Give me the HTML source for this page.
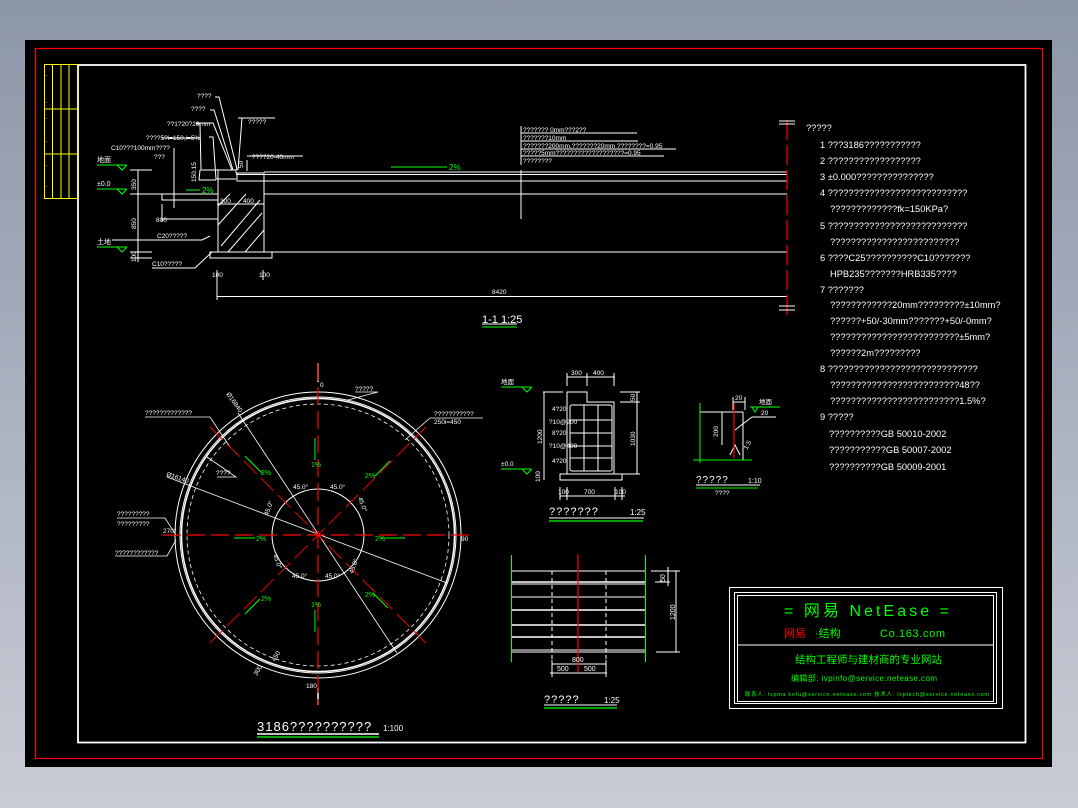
<!DOCTYPE html>
<html><head><meta charset="utf-8"><style>
html,body{margin:0;padding:0;width:1078px;height:808px;overflow:hidden;background:linear-gradient(#8b96a8,#c9ccd6);}
svg{display:block}
text{font-family:"Liberation Sans","Noto Sans CJK SC",sans-serif;fill:#fff}
</style></head><body>
<svg width="1078" height="808" viewBox="0 0 1078 808" xmlns="http://www.w3.org/2000/svg">
<rect x="25" y="40" width="1027" height="727" fill="#000"/>
<rect x="35.5" y="48.5" width="1007" height="710" fill="none" stroke="#f00" stroke-width="1.2"/>
<rect x="78" y="65" width="947.5" height="677.5" fill="none" stroke="#fff" stroke-width="1.8"/>
<g stroke="#ff0" stroke-width="1" fill="none">
<rect x="44.5" y="64.5" width="33" height="134"/>
<line x1="52.5" y1="64" x2="52.5" y2="198"/><line x1="61" y1="64" x2="61" y2="198"/><line x1="69" y1="64" x2="69" y2="198"/>
<line x1="44" y1="109" x2="78" y2="109"/><line x1="44" y1="154" x2="78" y2="154"/>
</g>
<g font-size="4"><text x="45" y="77" style="fill:#ff0">~</text><text x="45" y="104" style="fill:#ff0">~</text><text x="45" y="120" style="fill:#ff0">~</text><text x="45" y="143" style="fill:#ff0">~</text><text x="45" y="167" style="fill:#ff0">~</text><text x="45" y="188" style="fill:#ff0">~</text></g>

<g stroke="#fff" stroke-width="1" fill="none">
<line x1="264" y1="172" x2="787" y2="172"/><line x1="236" y1="174.5" x2="787" y2="174.5"/>
<line x1="264" y1="181" x2="787" y2="181"/><line x1="264" y1="194" x2="787" y2="194"/>
<line x1="210" y1="252" x2="787" y2="252"/>
<polyline points="218,252 218,170 236,170 236,173 264,173 264,252"/>
<rect x="210" y="252" width="62" height="6"/>
<rect x="237" y="173" width="27" height="8"/>
<line x1="221" y1="246" x2="260" y2="200"/><line x1="228" y1="252" x2="262" y2="213"/><line x1="245" y1="252" x2="264" y2="230"/><line x1="218" y1="225" x2="246" y2="194"/><line x1="218" y1="206" x2="230" y2="194"/>
<line x1="217" y1="204" x2="264" y2="204"/>
<line x1="138" y1="170" x2="138" y2="262"/>
<line x1="130" y1="170" x2="152" y2="170"/><line x1="130" y1="194" x2="218" y2="194"/><line x1="130" y1="252" x2="152" y2="252"/><line x1="130" y1="258" x2="152" y2="258"/>
<polyline points="162,194 162,200 218,200"/>
<line x1="162" y1="219" x2="218" y2="219"/><line x1="162" y1="204" x2="162" y2="222"/>
<line x1="174" y1="148" x2="174" y2="208"/>
<polyline points="196,124 200,124 201,170 218,170"/><polyline points="200,170 199,180 216,180"/>
<polyline points="209,137 213,137 216,179 236,179"/>
<polyline points="215,97 219,97 236,165 237,170"/><polyline points="210,110 214,110 233,170"/>
<polyline points="196,123 213,123 232,170"/>
<polyline points="162,138 200,138"/>
<polyline points="248,118 242,118 238,170"/><line x1="238" y1="118" x2="275" y2="118"/>
<polyline points="210,236 202,240 112,240"/><polyline points="212,252 195,268 152,268"/>
<line x1="247" y1="156" x2="303" y2="156"/><line x1="247" y1="160" x2="247" y2="171"/>
<line x1="217" y1="270" x2="217" y2="300"/><line x1="263" y1="270" x2="263" y2="280"/>
<line x1="217" y1="296.5" x2="787" y2="296.5"/>
<line x1="521" y1="170" x2="521" y2="219"/>
<line x1="521" y1="126" x2="521" y2="165"/>
<line x1="521" y1="133" x2="637" y2="133"/><line x1="521" y1="141" x2="638" y2="141"/><line x1="521" y1="149" x2="676" y2="149"/><line x1="521" y1="156" x2="664" y2="156"/>
<line x1="482" y1="324" x2="517" y2="324"/>
</g>
<line x1="787" y1="120" x2="787" y2="320" stroke="#f00" stroke-width="1.2" stroke-dasharray="20,5"/>
<g stroke="#fff"><line x1="779" y1="121" x2="795" y2="121"/><line x1="779" y1="124" x2="795" y2="124"/><line x1="779" y1="306" x2="795" y2="306"/><line x1="779" y1="310" x2="795" y2="310"/></g>
<g stroke="#0f0" stroke-width="1" fill="none">
<line x1="97" y1="165" x2="127" y2="165"/><line x1="97" y1="189" x2="127" y2="189"/><line x1="97" y1="247" x2="127" y2="247"/>
<polyline points="117,165 122,170 127,165"/><polyline points="117,189 122,194 127,189"/><polyline points="117,247 122,252 127,247"/>
<line x1="391" y1="167" x2="447" y2="167"/><line x1="186" y1="190" x2="200" y2="190"/>
<line x1="482" y1="327" x2="517" y2="327"/>
</g>
<g font-size="7"><text x="97" y="162">地面</text><text x="97" y="186">±0.0</text><text x="97" y="244">土地</text></g>
<g font-size="8"><text x="449" y="170" style="fill:#0f0">2%</text><text x="202" y="193" style="fill:#0f0">2%</text></g>
<g font-size="6.5">
<text x="197" y="98">????</text><text x="191" y="111">????</text><text x="167" y="126">??1?20?20mm</text><text x="146" y="140">????5?i=150,i=5%</text><text x="111" y="150">C10???100mm????</text><text x="154" y="159">???</text>
<text x="248" y="124">?????</text><text x="252" y="159">????20-40mm</text>
<text x="523" y="132">??????? 0mm???2??</text><text x="523" y="140">???????10mm</text><text x="523" y="148">???????200mm.???????20mm ????????=0.95</text><text x="523" y="155">?????5mm???????????????????=0.95</text><text x="523" y="163">????????</text>
<text x="156" y="222">800</text><text x="220" y="203">300</text><text x="243" y="203">400</text>
<text x="157" y="238">C20?????</text><text x="152" y="266">C10?????</text>
<text x="492" y="294">8420</text><text x="212" y="277">100</text><text x="259" y="277">100</text>
<text transform="translate(136,190) rotate(-90)">350</text><text transform="translate(136,229) rotate(-90)">850</text><text transform="translate(136,262) rotate(-90)">100</text>
<text transform="translate(196,182) rotate(-90)">150.15</text><text transform="translate(243,168) rotate(-90)">50</text>
</g>
<text x="482" y="323" font-size="11">1-1 1:25</text>

<g fill="none" stroke="#fff">
<circle cx="318" cy="535" r="143" stroke-width="1"/>
<circle cx="318" cy="535" r="138" stroke-width="1"/>
<circle cx="318" cy="535" r="136.5" stroke-width="1.5"/>
<circle cx="318" cy="535" r="131" stroke-width="0.8" stroke-dasharray="4,3"/>
<circle cx="318" cy="535" r="46" stroke-width="1"/>
<line x1="238" y1="413" x2="397" y2="653" stroke-width="0.8"/>
<line x1="167" y1="477" x2="447" y2="583" stroke-width="0.8"/>
<line x1="318" y1="363" x2="318" y2="382" stroke-width="1.5"/><line x1="318" y1="688" x2="318" y2="705" stroke-width="1.5"/>
<polyline points="145,417 210,417 230,447" stroke-width="0.8"/>
<polyline points="217,477 236,477 207,457" stroke-width="0.8"/>
<polyline points="117,518 165,518 176,535" stroke-width="0.8"/>
<polyline points="115,556 167,556 176,540" stroke-width="0.8"/>
<polyline points="355,392 378,392 348,400" stroke-width="0.8"/>
<polyline points="483,418 430,418 405,440" stroke-width="0.8"/>
</g>
<g stroke="#f00" stroke-width="0.9" fill="none" stroke-dasharray="18,6">
<line x1="163" y1="535" x2="472" y2="535" stroke-width="1.2"/>
<line x1="318" y1="363" x2="318" y2="705" stroke-width="1.2"/>
<line x1="210" y1="643" x2="426" y2="427"/><line x1="210" y1="427" x2="426" y2="643"/>
</g>
<g stroke="#0f0" stroke-width="1">
<line x1="315" y1="438" x2="315" y2="460"/><line x1="315" y1="610" x2="315" y2="632"/>
<line x1="234" y1="538" x2="255" y2="538"/><line x1="381" y1="538" x2="405" y2="538"/>
<line x1="245" y1="456" x2="262" y2="473"/><line x1="390" y1="461" x2="375" y2="476"/>
<line x1="245" y1="614" x2="260" y2="599"/><line x1="388" y1="608" x2="373" y2="593"/>
</g>
<g font-size="7"><text x="311" y="467" style="fill:#0f0">1%</text><text x="311" y="607" style="fill:#0f0">1%</text><text x="256" y="541" style="fill:#0f0">2%</text><text x="375" y="541" style="fill:#0f0">2%</text><text x="261" y="475" style="fill:#0f0">2%</text><text x="365" y="478" style="fill:#0f0">2%</text><text x="261" y="601" style="fill:#0f0">2%</text><text x="365" y="597" style="fill:#0f0">2%</text></g>
<g font-size="6.5">
<text x="320" y="387">0</text><text x="461" y="541">90</text><text x="306" y="688">180</text><text x="163" y="533">270°</text>
<text x="355" y="391">?????</text><text x="434" y="416">???????????</text><text x="434" y="424">250i=450</text>
<text x="145" y="415">?????????????</text><text x="216" y="475">????</text><text x="117" y="516">?????????</text><text x="117" y="526">?????????</text><text x="115" y="555">????????????</text>
<text x="293" y="489">45.0°</text><text x="330" y="489">45.0°</text><text x="292" y="578">45.0°</text><text x="325" y="578">45.0°</text>
<text transform="translate(268,516) rotate(-70)">45.0°</text><text transform="translate(358,498) rotate(70)">45.0°</text>
<text transform="translate(273,555) rotate(70)">45.0°</text><text transform="translate(353,574) rotate(-70)">45.0°</text>
<text transform="translate(226,394) rotate(55)">Ø16840</text><text transform="translate(166,476) rotate(18)">Ø16140</text>
<text transform="translate(275,662) rotate(-60)">450</text><text transform="translate(257,676) rotate(-60)">300</text>
</g>
<text x="257" y="731" font-size="13" letter-spacing="1">3186??????????</text>
<text x="383" y="731" font-size="8">1:100</text>
<line x1="257" y1="734" x2="379" y2="734" stroke="#fff" stroke-width="1.5"/><line x1="257" y1="737" x2="379" y2="737" stroke="#0f0" stroke-width="1.2"/>

<g stroke="#fff" stroke-width="1" fill="none">
<polyline points="567,474 567,392 587,392 587,402 614,402 614,474 567,474"/>
<rect x="560" y="474" width="62" height="6"/>
<rect x="570" y="405" width="42" height="66" rx="2"/>
<line x1="570" y1="420" x2="612" y2="420"/><line x1="570" y1="433" x2="612" y2="433"/><line x1="570" y1="446" x2="612" y2="446"/><line x1="570" y1="458" x2="612" y2="458"/>
<line x1="584" y1="405" x2="584" y2="471"/><line x1="598" y1="405" x2="598" y2="471"/>
<line x1="543" y1="392" x2="563" y2="392"/><line x1="544" y1="392" x2="544" y2="480"/>
<line x1="620" y1="392" x2="640" y2="392"/><line x1="620" y1="402" x2="640" y2="402"/><line x1="637" y1="392" x2="637" y2="474"/><line x1="615" y1="474" x2="640" y2="474"/>
<line x1="567" y1="377" x2="615" y2="377"/><line x1="567" y1="373" x2="567" y2="386"/><line x1="587" y1="373" x2="587" y2="386"/><line x1="614" y1="373" x2="614" y2="386"/>
<line x1="560" y1="496" x2="625" y2="496"/><line x1="560" y1="487" x2="560" y2="500"/><line x1="567" y1="487" x2="567" y2="500"/><line x1="615" y1="487" x2="615" y2="500"/><line x1="622" y1="487" x2="622" y2="500"/>
<line x1="549" y1="518" x2="644" y2="518"/>
</g>
<line x1="549" y1="521" x2="643" y2="521" stroke="#0f0" stroke-width="1.2"/>
<g stroke="#0f0" fill="none"><line x1="501" y1="387" x2="531" y2="387"/><polyline points="522,387 527,392 532,387"/><line x1="501" y1="469" x2="531" y2="469"/><polyline points="522,469 527,474 532,469"/></g>
<g font-size="6.5"><text x="501" y="384">地面</text><text x="501" y="466">±0.0</text>
<text x="571" y="375">300</text><text x="593" y="375">400</text><text x="584" y="494">700</text><text x="558" y="494">100</text><text x="615" y="494">100</text>
<text x="552" y="411">4?20</text><text x="549" y="424">?10@200</text><text x="552" y="435">8?20</text><text x="549" y="448">?10@400</text><text x="552" y="463">4?20</text>
<text transform="translate(542,444) rotate(-90)">1200</text><text transform="translate(635,446) rotate(-90)">1030</text><text transform="translate(540,482) rotate(-90)">100</text><text transform="translate(635,401) rotate(-90)">50</text>
</g>
<text x="549" y="515" font-size="11" letter-spacing="1">???????</text><text x="630" y="515" font-size="8">1:25</text>

<g stroke="#fff" fill="none" stroke-width="1">
<line x1="700" y1="412" x2="743" y2="412"/><line x1="743" y1="412" x2="743" y2="460"/><line x1="722" y1="412" x2="722" y2="445"/>
<line x1="733" y1="402" x2="745" y2="402"/><line x1="733" y1="397" x2="733" y2="410"/><line x1="745" y1="397" x2="745" y2="410"/>
<line x1="735" y1="430" x2="752" y2="417"/><line x1="752" y1="417" x2="776" y2="417"/>
<polyline points="730,455 735,445 740,455"/>
<line x1="696" y1="485" x2="760" y2="485"/>
</g>
<line x1="734" y1="403" x2="734" y2="458" stroke="#f00" stroke-width="1.2"/>
<g stroke="#0f0" fill="none"><line x1="693" y1="460" x2="752" y2="460"/><line x1="700" y1="403" x2="700" y2="463"/><line x1="750" y1="407" x2="780" y2="407"/><polyline points="752,407 755,412 758,407"/><line x1="696" y1="488" x2="758" y2="488"/></g>
<g font-size="6.5"><text x="735" y="400">20</text><text x="761" y="415">20</text><text x="759" y="404">地面</text><text transform="translate(718,437) rotate(-90)">200</text><text x="715" y="495">????</text><text transform="translate(747,450) rotate(-60)">1:5</text></g>
<text x="696" y="483" font-size="10" letter-spacing="1">?????</text><text x="748" y="483" font-size="7">1:10</text>

<g stroke="#fff" fill="none">
<line x1="511" y1="571" x2="646" y2="571"/><line x1="511" y1="582" x2="646" y2="582" stroke-width="1.5"/><line x1="511" y1="584" x2="646" y2="584"/>
<line x1="511" y1="597" x2="646" y2="597"/><line x1="511" y1="610" x2="646" y2="610" stroke-width="1.5"/><line x1="511" y1="625" x2="646" y2="625" stroke-width="1.5"/>
<line x1="511" y1="637" x2="646" y2="637" stroke-width="1.5"/><line x1="511" y1="650" x2="646" y2="650"/><line x1="511" y1="652" x2="646" y2="652"/>
<line x1="552" y1="571" x2="552" y2="660" stroke-dasharray="4,3"/><line x1="606" y1="571" x2="606" y2="660" stroke-dasharray="4,3"/>
<line x1="552" y1="664" x2="606" y2="664"/><line x1="550" y1="673" x2="607" y2="673"/><line x1="552" y1="660" x2="552" y2="677"/><line x1="606" y1="660" x2="606" y2="677"/>
<line x1="651" y1="571" x2="680" y2="571"/><line x1="655" y1="582" x2="670" y2="582"/><line x1="656" y1="652" x2="680" y2="652"/><line x1="676" y1="571" x2="676" y2="652"/><line x1="668" y1="567" x2="668" y2="586"/>
<line x1="544" y1="705" x2="617" y2="705"/>
</g>
<line x1="578" y1="554" x2="578" y2="672" stroke="#f00" stroke-width="1.2"/>
<g stroke="#0f0"><line x1="511.5" y1="555" x2="511.5" y2="662"/><line x1="645.5" y1="555" x2="645.5" y2="662"/><line x1="544" y1="708" x2="617" y2="708" stroke-width="1.2"/></g>
<g font-size="7"><text x="572" y="662">800</text><text x="557" y="671">500</text><text x="584" y="671">500</text><text transform="translate(665,582) rotate(-90)">50</text><text transform="translate(675,620) rotate(-90)">1200</text></g>
<text x="544" y="703" font-size="11" letter-spacing="1">?????</text><text x="604" y="703" font-size="8">1:25</text>

<g font-size="9.3">
<text x="806" y="131">?????</text>
<text x="820" y="148">1 ???3186???????????</text>
<text x="820" y="164">2 ??????????????????</text>
<text x="820" y="180">3 ±0.000???????????????</text>
<text x="820" y="196">4 ???????????????????????????</text>
<text x="830" y="212">?????????????fk=150KPa?</text>
<text x="820" y="229">5 ???????????????????????????</text>
<text x="830" y="245">?????????????????????????</text>
<text x="820" y="261">6 ????C25??????????C10???????</text>
<text x="830" y="277">HPB235???????HRB335????</text>
<text x="820" y="293">7 ???????</text>
<text x="830" y="308">????????????20mm?????????±10mm?</text>
<text x="830" y="324">??????+50/-30mm???????+50/-0mm?</text>
<text x="830" y="340">?????????????????????????±5mm?</text>
<text x="830" y="356">??????2m?????????</text>
<text x="820" y="372">8 ?????????????????????????????</text>
<text x="830" y="388">?????????????????????????48??</text>
<text x="830" y="404">?????????????????????????1.5%?</text>
<text x="820" y="420">9 ?????</text>
<text x="829" y="437">??????????GB 50010-2002</text>
<text x="829" y="453">???????????GB 50007-2002</text>
<text x="829" y="470">??????????GB 50009-2001</text>
</g>

<g stroke="#fff" fill="none">
<rect x="729.5" y="587.5" width="273" height="121"/>
<rect x="734.5" y="592.5" width="262" height="111"/>
<rect x="737.5" y="595.5" width="256" height="106"/>
<line x1="737" y1="645" x2="994" y2="645"/>
</g>
<g font-family="Liberation Mono,'Noto Sans CJK SC',monospace">
<text x="784" y="616" font-size="16" textLength="165" lengthAdjust="spacing" style="fill:#0f0">=  网易 NetEase  =</text>
<text x="784" y="637" font-size="11" style="fill:#f00">网易</text>
<text x="815" y="637" font-size="11" style="fill:#0f0">·结构</text>
<text x="880" y="637" font-size="11" textLength="65" style="fill:#0f0">Co.163.com</text>
<text x="795" y="663" font-size="10.5" style="fill:#0f0">结构工程师与建材商的专业网站</text>
<text x="791" y="681" font-size="8" textLength="146" style="fill:#0f0">编辑部: ivpinfo@service.netease.com</text>
<text x="745" y="696" font-size="5.5" textLength="244" style="fill:#0f0">联系人: lspma kefu@service.netease.com  技术人: lsptech@service.netease.com</text>
</g>
</svg>
</body></html>
